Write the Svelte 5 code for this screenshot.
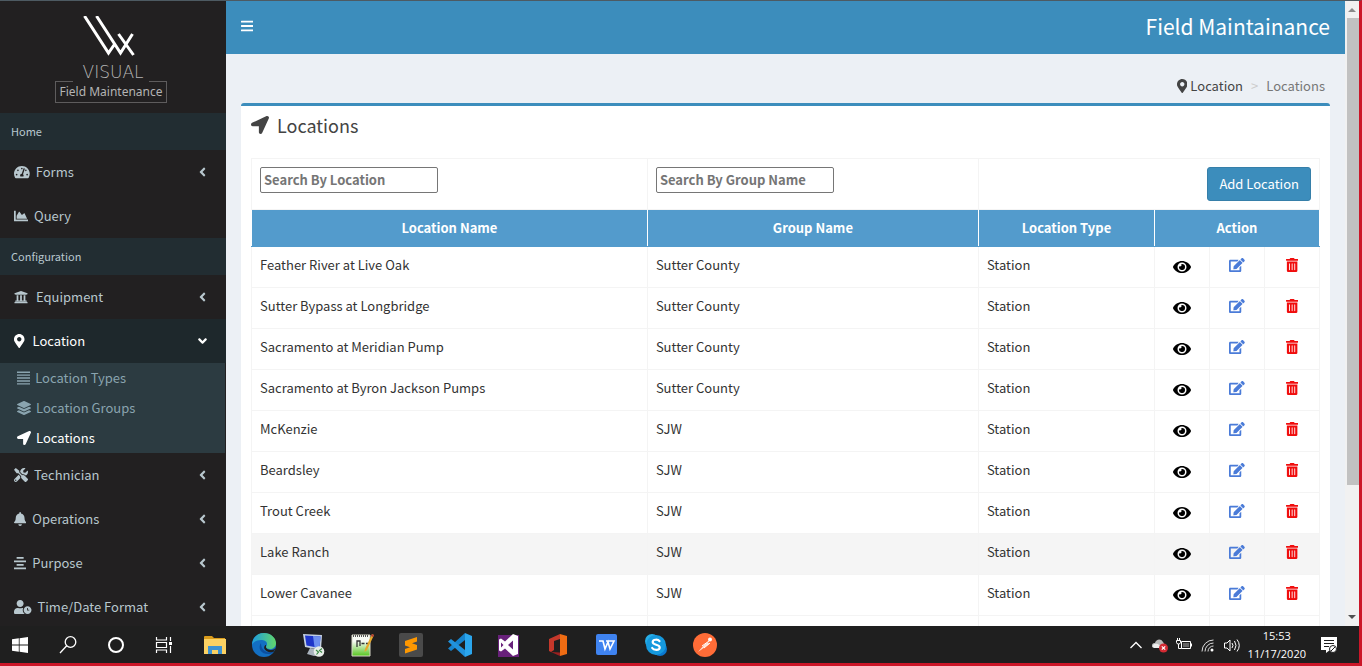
<script lang="ts">
  interface Icon {
    w: number
    d: string
  }

  interface NavItem {
    label: string
    icon: string
    arrow?: boolean
    roomy?: boolean
  }

  interface Location {
    name: string
    group: string
    type: string
  }

  const icons: Record<string, Icon> = {
    bars: { w: 448, d: 'M16 132h416c8.837 0 16-7.163 16-16V76c0-8.837-7.163-16-16-16H16C7.163 60 0 67.163 0 76v40c0 8.837 7.163 16 16 16zm0 160h416c8.837 0 16-7.163 16-16v-40c0-8.837-7.163-16-16-16H16c-8.837 0-16 7.163-16 16v40c0 8.837 7.163 16 16 16zm0 160h416c8.837 0 16-7.163 16-16v-40c0-8.837-7.163-16-16-16H16c-8.837 0-16 7.163-16 16v40c0 8.837 7.163 16 16 16z' },
    arrow: { w: 512, d: 'M444.52 3.52L28.74 195.42c-47.97 22.39-31.98 92.75 19.19 92.75h175.91v175.91c0 51.17 70.36 67.17 92.75 19.19l191.9-415.78c15.99-38.39-25.59-79.97-63.97-63.97z' },
    marker: { w: 384, d: 'M172.268 501.67C26.97 291.031 0 269.413 0 192 0 85.961 85.961 0 192 0s192 85.961 192 192c0 77.413-26.97 99.031-172.268 309.67-9.535 13.774-29.93 13.773-39.464 0zM192 272c44.183 0 80-35.817 80-80s-35.817-80-80-80-80 35.817-80 80 35.817 80 80 80z' },
    gauge: { w: 576, d: 'M288 32C128.94 32 0 160.94 0 320c0 52.8 14.25 102.26 39.06 144.8 5.61 9.62 16.3 15.2 27.44 15.2h443c11.14 0 21.83-5.58 27.44-15.2C561.75 422.26 576 372.8 576 320c0-159.06-128.94-288-288-288zm0 64c14.71 0 26.58 10.13 30.32 23.65-1.11 2.26-2.64 4.23-3.45 6.67l-9.22 27.67c-5.13 3.49-10.97 6.01-17.64 6.01-17.67 0-32-14.33-32-32S270.33 96 288 96zM96 384c-17.67 0-32-14.33-32-32s14.33-32 32-32 32 14.33 32 32-14.33 32-32 32zm48-160c-17.67 0-32-14.33-32-32s14.33-32 32-32 32 14.33 32 32-14.33 32-32 32zm246.77-72.41l-61.33 184C343.13 347.33 352 364.54 352 384c0 11.72-3.38 22.55-8.88 32H232.88c-5.5-9.45-8.88-20.28-8.88-32 0-33.94 26.5-61.43 59.9-63.59l61.34-184.01c4.17-12.56 17.73-19.45 30.36-15.17 12.57 4.19 19.35 17.79 15.17 30.36zm14.66 57.2l15.52-46.55c3.47-1.29 7.13-2.23 11.05-2.23 17.67 0 32 14.33 32 32s-14.33 32-32 32c-11.38-.01-20.89-6.28-26.57-15.22zM480 384c-17.67 0-32-14.33-32-32s14.33-32 32-32 32 14.33 32 32-14.33 32-32 32z' },
    chart: { w: 512, d: 'M500 384c6.6 0 12 5.4 12 12v40c0 6.6-5.4 12-12 12H12c-6.6 0-12-5.4-12-12V76c0-6.6 5.4-12 12-12h40c6.6 0 12 5.4 12 12v308h436zM372.7 159.5L288 216l-85.3-113.7c-5.1-6.8-15.5-6.3-19.9 1L96 248v104h384l-89.9-187.8c-3.2-6.5-11.4-8.7-17.4-4.7z' },
    building: { w: 512, d: 'M496 128v16a8 8 0 0 1-8 8h-24v12c0 6.627-5.373 12-12 12H60c-6.627 0-12-5.373-12-12v-12H24a8 8 0 0 1-8-8v-16a8 8 0 0 1 4.941-7.392l232-88a7.996 7.996 0 0 1 6.118 0l232 88A8 8 0 0 1 496 128zm-24 304H40c-13.255 0-24 10.745-24 24v16a8 8 0 0 0 8 8h464a8 8 0 0 0 8-8v-16c0-13.255-10.745-24-24-24zM96 192v192H60c-6.627 0-12 5.373-12 12v20h416v-20c0-6.627-5.373-12-12-12h-36V192h-64v192h-64V192h-64v192h-64V192H96z' },
    lines: { w: 480, d: 'M0 20h480v52H0zM0 126h480v52H0zM0 232h480v52H0zM0 338h480v52H0zM0 444h480v52H0z' },
    layers: { w: 512, d: 'M12.41 148.02l232.94 105.67c6.8 3.09 14.49 3.09 21.29 0l232.94-105.67c16.55-7.51 16.55-32.52 0-40.03L266.65 2.31a25.607 25.607 0 0 0-21.29 0L12.41 107.98c-16.55 7.51-16.55 32.53 0 40.04zm487.18 88.28l-58.09-26.33-161.64 73.27c-7.56 3.43-15.59 5.17-23.86 5.17s-16.29-1.74-23.86-5.17L70.51 209.97l-58.1 26.33c-16.55 7.5-16.55 32.5 0 40l232.94 105.59c6.8 3.08 14.49 3.08 21.29 0L499.59 276.3c16.55-7.5 16.55-32.5 0-40zm0 127.8l-57.87-26.23-161.86 73.37c-7.56 3.43-15.59 5.17-23.86 5.17s-16.29-1.74-23.86-5.17L70.29 337.87 12.41 364.1c-16.55 7.5-16.55 32.5 0 40l232.94 105.59c6.8 3.08 14.49 3.08 21.29 0L499.59 404.1c16.55-7.5 16.55-32.5 0-40z' },
    tools: { w: 512, d: 'M501.1 395.7L384 278.6c-23.1-23.1-57.6-27.6-85.4-13.9L192 158.1V96L64 0 0 64l96 128h62.1l106.6 106.6c-13.6 27.8-9.2 62.3 13.9 85.4l117.1 117.1c14.6 14.6 38.2 14.6 52.7 0l52.7-52.7c14.5-14.6 14.5-38.2 0-52.7zM331.7 225c28.3 0 54.9 11 74.9 31l19.4 19.4c15.8-6.9 30.8-16.5 43.8-29.5 37.1-37.1 49.7-89.3 37.9-136.7-2.2-9-13.5-12.1-20.1-5.5l-74.4 74.4-67.9-11.3L334 98.9l74.4-74.4c6.6-6.6 3.4-17.9-5.7-20.2-47.4-11.7-99.6.9-136.6 37.9-28.5 28.5-41.9 66.1-41.2 103.6l82.1 82.1c8.1-1.9 16.5-2.9 24.7-2.9zm-103.9 82l-56.7-56.7L18.7 402.8c-25 25-25 65.5 0 90.5s65.5 25 90.5 0l123.6-123.6c-7.6-19.9-9.9-41.6-5-62.7zM64 472c-13.2 0-24-10.8-24-24 0-13.3 10.7-24 24-24s24 10.7 24 24c0 13.2-10.7 24-24 24z' },
    bell: { w: 448, d: 'M224 512c35.32 0 63.97-28.65 63.97-64H160.03c0 35.35 28.65 64 63.97 64zm215.39-149.71c-19.32-20.76-55.47-51.99-55.47-154.29 0-77.7-54.48-139.9-127.94-155.16V32c0-17.67-14.32-32-31.98-32s-31.98 14.33-31.98 32v20.84C118.56 68.1 64.08 130.3 64.08 208c0 102.3-36.15 133.53-55.47 154.29-6 6.45-8.66 14.16-8.61 21.71.11 16.4 12.98 32 32.1 32h383.8c19.12 0 32-15.6 32.1-32 .05-7.55-2.61-15.27-8.61-21.71z' },
    center: { w: 448, d: 'M96 32h256v64H96zM0 160h448v64H0zM96 288h256v64H96zM0 416h448v64H0z' },
    clock: { w: 640, d: 'M496 224c-79.6 0-144 64.4-144 144s64.4 144 144 144 144-64.4 144-144-64.4-144-144-144zm64 150.3c0 5.3-4.4 9.7-9.7 9.7h-60.6c-5.3 0-9.7-4.4-9.7-9.7v-76.6c0-5.3 4.4-9.7 9.7-9.7h12.6c5.3 0 9.7 4.4 9.7 9.7V352h38.3c5.3 0 9.7 4.4 9.7 9.7v12.6zM320 368c0-27.8 6.7-54.1 18.2-77.5-8-1.5-16.2-2.5-24.6-2.5h-16.7c-22.2 10.2-46.9 16-72.9 16s-50.6-5.8-72.9-16h-16.7C60.2 288 0 348.2 0 422.4V464c0 26.5 21.5 48 48 48h347.1c-45.3-31.9-75.1-84.5-75.1-144zm-96-112c70.7 0 128-57.3 128-128S294.7 0 224 0 96 57.3 96 128s57.3 128 128 128z' },
    eye: { w: 576, d: 'M572.52 241.4C518.29 135.59 410.93 64 288 64S57.68 135.64 3.48 241.41a32.35 32.35 0 0 0 0 29.19C57.71 376.41 165.07 448 288 448s230.32-71.64 284.52-177.41a32.35 32.35 0 0 0 0-29.19zM288 400a144 144 0 1 1 144-144 143.93 143.93 0 0 1-144 144zm0-240a95.31 95.31 0 0 0-25.31 3.79 47.85 47.85 0 0 1-66.9 66.9A95.78 95.78 0 1 0 288 160z' },
    edit: { w: 576, d: 'M402.6 83.2l90.2 90.2c3.8 3.8 3.8 10 0 13.8L274.4 405.6l-92.8 10.3c-12.4 1.4-22.9-9.1-21.5-21.5l10.3-92.8L388.8 83.2c3.8-3.8 10-3.8 13.8 0zm162-22.9l-48.8-48.8c-15.2-15.2-39.9-15.2-55.2 0l-35.4 35.4c-3.8 3.8-3.8 10 0 13.8l90.2 90.2c3.8 3.8 10 3.8 13.8 0l35.4-35.4c15.2-15.3 15.2-40 0-55.2zM384 346.2V448H64V128h229.8c3.2 0 6.2-1.3 8.5-3.5l40-40c7.6-7.6 2.2-20.5-8.5-20.5H48C21.5 64 0 85.5 0 112v352c0 26.5 21.5 48 48 48h352c26.5 0 48-21.5 48-48V306.2c0-10.7-12.9-16-20.5-8.5l-40 40c-2.2 2.3-3.5 5.3-3.5 8.5z' },
    trash: { w: 448, d: 'M32 464a48 48 0 0 0 48 48h288a48 48 0 0 0 48-48V128H32zm272-256a16 16 0 0 1 32 0v224a16 16 0 0 1-32 0zm-96 0a16 16 0 0 1 32 0v224a16 16 0 0 1-32 0zm-96 0a16 16 0 0 1 32 0v224a16 16 0 0 1-32 0zM432 32H312l-9.4-18.7A24 24 0 0 0 281.1 0H166.8a23.72 23.72 0 0 0-21.4 13.3L136 32H16A16 16 0 0 0 0 48v32a16 16 0 0 0 16 16h416a16 16 0 0 0 16-16V48a16 16 0 0 0-16-16z' },
    angle: { w: 256, d: 'M31.7 239l136-136c9.4-9.4 24.6-9.4 33.9 0l22.6 22.6c9.4 9.4 9.4 24.6 0 33.9L127.9 256l96.4 96.4c9.4 9.4 9.4 24.6 0 33.9L201.7 409c-9.4 9.4-24.6 9.4-33.9 0l-136-136c-9.5-9.4-9.5-24.6-.1-34z' },
  }

  const home: NavItem[] = [
    { label: 'Forms', icon: 'gauge', arrow: true },
    { label: 'Query', icon: 'chart' },
  ]

  const locationMenu: NavItem[] = [
    { label: 'Location Types', icon: 'lines' },
    { label: 'Location Groups', icon: 'layers' },
    { label: 'Locations', icon: 'arrow' },
  ]

  const configuration: NavItem[] = [
    { label: 'Technician', icon: 'tools', arrow: true },
    { label: 'Operations', icon: 'bell', arrow: true },
    { label: 'Purpose', icon: 'center', arrow: true },
    { label: 'Time/Date Format', icon: 'clock', arrow: true },
  ]

  const locations: Location[] = [
    { name: 'Feather River at Live Oak', group: 'Sutter County', type: 'Station' },
    { name: 'Sutter Bypass at Longbridge', group: 'Sutter County', type: 'Station' },
    { name: 'Sacramento at Meridian Pump', group: 'Sutter County', type: 'Station' },
    { name: 'Sacramento at Byron Jackson Pumps', group: 'Sutter County', type: 'Station' },
    { name: 'McKenzie', group: 'SJW', type: 'Station' },
    { name: 'Beardsley', group: 'SJW', type: 'Station' },
    { name: 'Trout Creek', group: 'SJW', type: 'Station' },
    { name: 'Lake Ranch', group: 'SJW', type: 'Station' },
    { name: 'Lower Cavanee', group: 'SJW', type: 'Station' },
  ]

  let nameQuery = $state('')
  let groupQuery = $state('')
  let locationOpen = $state(true)
  let highlighted = $state('Lake Ranch')

  const visible = $derived(
    locations.filter(
      (l) =>
        l.name.toLowerCase().includes(nameQuery.toLowerCase()) &&
        l.group.toLowerCase().includes(groupQuery.toLowerCase())
    )
  )
</script>

{#snippet icon(name: string)}
  <svg class="icon" viewBox="0 0 {icons[name].w} 512" aria-hidden="true">
    <path d={icons[name].d} />
  </svg>
{/snippet}

{#snippet navItem(item: NavItem)}
  <li>
    <a class="nav-link" class:roomy={item.roomy} href="#{item.label}">
      {@render icon(item.icon)}
      <span>{item.label}</span>
      {#if item.arrow}<i class="caret">{@render icon('angle')}</i>{/if}
    </a>
  </li>
{/snippet}

<div class="screen">
  <div class="window">
    <aside class="sidebar">
      <div class="brand">
        <svg class="brand-mark" viewBox="0 0 52 40" aria-hidden="true">
          <path d="M1.500 0L25.500 37L31 29M13.500 0L37.500 37L49.500 18M35.500 18L50.500 39" />
        </svg>
        <span class="brand-name">VISUAL</span>
        <span class="brand-sub">Field Maintenance</span>
      </div>
      <nav>
        <h2 class="nav-header">Home</h2>
        <ul>
          {#each home as item}{@render navItem(item)}{/each}
        </ul>
        <h2 class="nav-header">Configuration</h2>
        <ul>
          {@render navItem({ label: 'Equipment', icon: 'building', arrow: true, roomy: true })}
          <li>
            <button class="nav-link roomy active" onclick={() => (locationOpen = !locationOpen)}>
              {@render icon('marker')}
              <span>Location</span>
              <i class="caret" class:down={locationOpen}>{@render icon('angle')}</i>
            </button>
            {#if locationOpen}
              <ul class="submenu">
                {#each locationMenu as item}
                  <li>
                    <a href="#{item.label}" class:current={item.label === 'Locations'}>
                      {@render icon(item.icon)}
                      <span>{item.label}</span>
                    </a>
                  </li>
                {/each}
              </ul>
            {/if}
          </li>
          {#each configuration as item}{@render navItem(item)}{/each}
        </ul>
      </nav>
    </aside>

    <div class="page">
      <header class="navbar">
        <button class="toggle" aria-label="Toggle navigation">{@render icon('bars')}</button>
        <span class="app-title">Field Maintainance</span>
      </header>

      <main>
        <nav class="breadcrumb" aria-label="Breadcrumb">
          <a href="#location">{@render icon('marker')}Location</a>
          <span class="sep">&gt;</span>
          <span>Locations</span>
        </nav>

        <section class="box">
          <h1>{@render icon('arrow')}Locations</h1>
          <table>
            <colgroup>
              <col />
              <col class="col-group" />
              <col class="col-type" />
              <col class="col-action" />
              <col class="col-action" />
              <col class="col-action" />
            </colgroup>
            <thead>
              <tr class="filters">
                <td>
                  <input type="text" placeholder="Search By Location" aria-label="Search By Location" bind:value={nameQuery} />
                </td>
                <td>
                  <input type="text" placeholder="Search By Group Name" aria-label="Search By Group Name" bind:value={groupQuery} />
                </td>
                <td colspan="4" class="add"><button>Add Location</button></td>
              </tr>
              <tr class="heads">
                <th>Location Name</th>
                <th>Group Name</th>
                <th>Location Type</th>
                <th colspan="3">Action</th>
              </tr>
            </thead>
            <tbody>
              {#each visible as row (row.name)}
                <tr class:hovered={row.name === highlighted} onmouseenter={() => (highlighted = row.name)}>
                  <td>{row.name}</td>
                  <td>{row.group}</td>
                  <td>{row.type}</td>
                  <td class="action view"><button aria-label="View {row.name}">{@render icon('eye')}</button></td>
                  <td class="action edit"><button aria-label="Edit {row.name}">{@render icon('edit')}</button></td>
                  <td class="action delete"><button aria-label="Delete {row.name}">{@render icon('trash')}</button></td>
                </tr>
              {/each}
              <tr><td></td><td></td><td></td><td></td><td></td><td></td></tr>
            </tbody>
          </table>
        </section>
      </main>
    </div>

    <div class="scrollbar" aria-hidden="true">
      <svg viewBox="0 0 14 17"><path d="M3 11l4-4 4 4z" fill="#8a8a8a" /></svg>
      <div class="track"><div class="thumb"></div></div>
      <svg viewBox="0 0 14 17"><path d="M3 6l4 4 4-4z" fill="#505050" /></svg>
    </div>
  </div>

  <footer class="taskbar">
    <div class="system">
      <button aria-label="Start">
        <svg viewBox="0 0 24 24" fill="#fff"><path d="M4 6.300l6.800-1v6.300H4zM11.600 5.200L20 4v7.600h-8.400zM4 12.400h6.800v6.300L4 17.800zM11.600 12.400H20V20l-8.400-1.200z" /></svg>
      </button>
      <button aria-label="Search">
        <svg viewBox="0 0 24 24" fill="none" stroke="#fff" stroke-width="1.300"><circle cx="14.500" cy="9" r="5.300" /><path d="M10.700 12.800L4 20" /></svg>
      </button>
      <button aria-label="Cortana">
        <svg viewBox="0 0 24 24" fill="none" stroke="#fff" stroke-width="2"><circle cx="12" cy="12" r="7" /></svg>
      </button>
      <button aria-label="Task View">
        <svg viewBox="0 0 24 24" fill="none" stroke="#fff" stroke-width="1.200"><path d="M4.500 4v3h10V4M4.500 20v-3h10v3M4.500 9.500h10v5h-10zM18.500 4v4M18.500 13v7" /><path d="M17 9h3v3h-3z" fill="#fff" stroke="none" /></svg>
      </button>
    </div>
    <div class="apps">
      <button aria-label="File Explorer">
        <svg viewBox="0 0 24 24"><path d="M1 4q0-1 1-1h7l2 2h11v16H1z" fill="#d99c1c" /><path d="M1 6h22v15H1z" fill="#fbd163" /><path d="M5 13h14v8h-4v-4H9v4H5z" fill="#3c92d2" /></svg>
      </button>
      <button aria-label="Microsoft Edge">
        <svg viewBox="0 0 24 24">
          <defs><linearGradient id="edge" x1="0" y1="0" x2="1" y2="0"><stop offset="0" stop-color="#1d9de0" /><stop offset="1" stop-color="#62d66a" /></linearGradient></defs>
          <circle cx="12" cy="12" r="12" fill="#136fc2" />
          <path d="M0 12C0 5 5 0 12 0s12 5 12 10c0 4-3 6-6 6-2.500 0-4-1-4-2 0-.8 1-1 1-3 0-3-3-4-6-4-4 0-8 2-9 5z" fill="url(#edge)" />
          <path d="M9 10c-4 6 1 12 9 11 2-.3 4-2 4-3-5 3-13 1-13-8z" fill="#0c4fa0" />
          <path d="M14 14c0 2 3 3 5 3 2 0 3.500-1 4.500-2L22 18.500c-4 2-8 0-9.500-2.500-1-2 .5-4 1.500-4z" fill="#1f1f1f" />
        </svg>
      </button>
      <button aria-label="Remote Desktop">
        <svg viewBox="0 0 24 24"><path d="M2 1l19 1-1 15-16-3z" fill="#c4d0e2" /><path d="M4 2.500l15.500 1-1 11.500L5.500 12.500z" fill="#1e35c9" /><path d="M12 3l7.500.5-1 11.500-5-1z" fill="#6d8ff0" /><path d="M9 15l5 1v4l5 2-6 1-7-2z" fill="#aab3bd" /><circle cx="18" cy="18.500" r="5.300" fill="#e7ece7" /><path d="M15 17l2.500 2-2 2.500M21 15.500l-2.500 2 2.500 2" fill="none" stroke="#3a8a45" stroke-width="1.200" /></svg>
      </button>
      <button aria-label="Notepad++">
        <svg viewBox="0 0 24 24"><defs><linearGradient id="note" x1="0" y1="0" x2="0" y2="1"><stop offset=".3" stop-color="#f7faf4" /><stop offset="1" stop-color="#55c51e" /></linearGradient></defs><path d="M2 2h18v21H2z" fill="url(#note)" stroke="#d6d6c6" /><path d="M3 3h16" stroke="#555" stroke-width="2" stroke-dasharray="1 1" /><path d="M7 14V8h3v5M11.500 10.500h3M16 10.500h2" fill="none" stroke="#333" stroke-width="1.300" /><path d="M22 1l2 1-7 15-2.500 2 .5-3z" fill="#e8a92c" /><path d="M22 1l2 1-1 2-2-1z" fill="#b23b38" /></svg>
      </button>
      <button aria-label="Sublime Text">
        <svg viewBox="0 0 24 24"><rect width="24" height="24" rx="2" fill="#4a4a4a" /><path d="M18 4v4.500l-5 1.700 5 1.800v4.500L6 20.500V16l5-1.700-5-1.800V8z" fill="#ff9800" /></svg>
      </button>
      <button aria-label="Visual Studio Code">
        <svg viewBox="0 0 24 24"><path d="M17 0l7 3v18l-7 3z" fill="#2ba6ed" /><path d="M17 0v7L3 18l-3-2.500z" fill="#1683cc" /><path d="M17 24v-7L3 6 0 8.500z" fill="#2192dc" /></svg>
      </button>
      <button aria-label="Visual Studio">
        <svg viewBox="0 0 24 24"><path d="M1 2h21v22H1z" fill="#68217a" /><path d="M16 1l5 2v18l-5 2-8-7.500-4 3-2-1V6.500l2-1 4 3zM16 7.500L11 12l5 4.500zM4 9.500v5L6.500 12z" fill="#fff" fill-rule="evenodd" /></svg>
      </button>
      <button aria-label="Office">
        <svg viewBox="0 0 24 24"><path d="M3 6l11-5v5L8 8v9l-3 2-2-1z" fill="#c5382b" /><path d="M14 1l7 2v18l-7 2z" fill="#ef6c13" /><path d="M5 19l9 .5V23z" fill="#9c2020" /></svg>
      </button>
      <button aria-label="WPS Writer">
        <svg viewBox="0 0 24 24"><rect x="1" y="1" width="21" height="21" rx="2" fill="#3f83f0" /><path d="M4 8h4l2 8 3-7 2 7 4-8h-8" fill="none" stroke="#fff" stroke-width="1.600" /></svg>
      </button>
      <button aria-label="Skype">
        <svg viewBox="0 0 24 24"><circle cx="8" cy="8" r="7" fill="#27aee8" /><circle cx="16" cy="16" r="7" fill="#0a78cf" /><circle cx="12" cy="12" r="10" fill="#1599de" /><path d="M15.500 8.200C14 6 8.700 6.200 8.700 9c0 3.500 7 2 7 5.500 0 3.200-6 3-7.500.5" fill="none" stroke="#fff" stroke-width="2.200" stroke-linecap="round" /></svg>
      </button>
      <button aria-label="Postman">
        <svg viewBox="0 0 24 24"><circle cx="12" cy="12" r="12" fill="#ff6c37" /><path d="M5 19l6-7 4-3 1 2-4 3z" fill="#fde3d8" /><circle cx="17" cy="6.500" r="2" fill="#fff" /><path d="M9 13l7-5M11 15l6-5" stroke="#fff" /></svg>
      </button>
    </div>

    <div class="tray">
      <svg viewBox="0 0 16 16" fill="none" stroke="#fff" stroke-width="1.300"><path d="M2.500 11L8 5.500l5.500 5.500" /></svg>
      <svg viewBox="0 0 16 16"><path d="M0 10c-.5-3 1-4 3-4 1-4 6-5 8-1l2 3v3H2z" fill="#b9b9b9" /><path d="M3 7c3-1 5 1 6 4H2c-2-2-1-4 1-4z" fill="#ededed" /><circle cx="11.500" cy="11" r="4.500" fill="#d42a33" /><path d="M9.800 9.300l3.400 3.400M13.200 9.300l-3.400 3.400" stroke="#fff" stroke-width="1.200" /></svg>
      <svg viewBox="0 0 16 16" fill="none" stroke="#fff"><path d="M5.500 4.500h9v7h-9zM15.500 6.500v3M.5 3.500h4v2q0 1.500-2 1.500t-2-1.500zM1.500 1v2.500M3.500 1v2.500M2.500 7v4.500h3" /><path d="M7 6h6v4H7z" fill="#fff" stroke="none" opacity=".3" /></svg>
      <svg viewBox="0 0 16 16" fill="none" stroke="#ddd"><path d="M2 14.500A11.500 11.500 0 0 1 13.500 3M5 14.500A8.500 8.500 0 0 1 13.500 6M8 14.500A5.500 5.500 0 0 1 13.500 9" /><circle cx="12" cy="13" r="1.500" fill="#fff" stroke="none" /></svg>
      <svg viewBox="0 0 16 16" fill="none" stroke="#fff"><path d="M.5 6h2.500l3-3v11l-3-3H.5zM8 6q2 2.500 0 5M10.500 4q3 4.500 0 9M13 2.500q4.500 6 0 12" /></svg>
      <div class="clock"><span>15:53</span><span>11/17/2020</span></div>
      <svg class="notice" viewBox="0 0 18 18"><path d="M1 1h16v13h-7l-4 3v-3H1z" fill="#fff" /><path d="M4 4.500h10M4 7.500h10M4 10.500h5" stroke="#1f1f1f" /><circle cx="13" cy="13" r="3.500" fill="#fff" stroke="#1f1f1f" /><path d="M11 15l4-4" stroke="#1f1f1f" /></svg>
    </div>
  </footer>
</div>

<style>
  :global(body) {
    margin: 0;
  }

  .screen {
    display: flex;
    flex-direction: column;
    height: 100vh;
    box-sizing: border-box;
    overflow: hidden;
    border-top: 1px solid #4d5a62;
    border-right: 3px solid #cb1628;
    border-bottom: 3px solid #cb1628;
    background: #ecf0f5;
    color: #333;
    font-family: 'Noto Sans CJK SC', 'Open Sans', sans-serif;
    font-size: 13px;
    line-height: 20px;
  }

  button {
    border: 0;
    padding: 0;
    background: none;
    color: inherit;
    font: inherit;
    cursor: pointer;
  }

  a {
    color: inherit;
    text-decoration: none;
  }

  ul {
    list-style: none;
    margin: 0;
    padding: 0;
  }

  .icon {
    display: block;
    flex: none;
    height: 14px;
    fill: currentColor;
  }

  .window {
    display: flex;
    flex: 1;
    min-height: 0;
  }

  /* Sidebar */
  .sidebar {
    flex: none;
    width: 226px;
    overflow: hidden;
    background: #222021;
    color: #b8c7ce;
  }

  .brand {
    display: flex;
    flex-direction: column;
    align-items: center;
    box-sizing: border-box;
    height: 112px;
    padding: 15px 4px 0 0;
    color: #b4b4b4;
  }

  .brand-mark {
    width: 52px;
    height: 40px;
    margin-right: 4px;
    fill: none;
    stroke: #fff;
    stroke-width: 3;
  }

  .brand-name {
    padding-left: 4px;
    margin-top: 7px;
    font-family: 'DejaVu Sans', sans-serif;
    font-size: 17px;
    font-weight: 200;
    line-height: 18px;
  }

  /* The frame's top edge is open under the name, so only its corners are drawn */
  .brand-sub {
    padding: 1px 3px 0;
    border: 1px solid #5e5c5d;
    border-top: 0;
    background:
      linear-gradient(#5e5c5d, #5e5c5d) left top / 17px 1px no-repeat,
      linear-gradient(#5e5c5d, #5e5c5d) right top / 17px 1px no-repeat;
    font-family: 'Noto Sans', sans-serif;
    font-size: 12px;
    line-height: 20px;
  }

  .nav-header {
    margin: 0;
    padding: 8px 11px 9px;
    background: #222d32;
    font-size: 11px;
    font-weight: 400;
    line-height: 20px;
  }

  .nav-link {
    display: flex;
    align-items: center;
    gap: 6px;
    box-sizing: border-box;
    width: 100%;
    padding: 12px 20px 12px 14px;
    text-align: left;
  }

  .nav-link.roomy {
    gap: 8px;
  }

  .nav-link.active {
    background: #1e282c;
    color: #fff;
  }

  .caret {
    margin-left: auto;
  }

  .caret.down {
    transform: rotate(-90deg);
  }

  .submenu {
    margin-right: 1px;
    background: #2c3b41;
    color: #8aa4af;
  }

  .submenu a {
    display: flex;
    align-items: center;
    gap: 5px;
    padding: 5px 17px;
  }

  .submenu .current {
    color: #fff;
  }

  /* Main column */
  .page {
    flex: 1;
    min-width: 0;
    overflow: hidden;
  }

  .navbar {
    display: flex;
    align-items: center;
    justify-content: space-between;
    box-sizing: border-box;
    height: 53px;
    padding: 0 15px 4px;
    background: #3c8dbc;
    color: #fff;
  }

  .app-title {
    font-size: 21px;
    line-height: 28px;
  }

  main {
    padding: 0 15px;
  }

  .breadcrumb {
    display: flex;
    justify-content: flex-end;
    gap: 8px;
    padding: 22px 5px 7px;
    color: #777;
  }

  .breadcrumb a {
    display: flex;
    align-items: center;
    gap: 3px;
    color: #444;
  }

  .sep {
    color: #ccc;
  }

  .box {
    padding: 0 10px 10px;
    border-top: 3px solid #3c8dbc;
    border-radius: 3px;
    background: #fff;
  }

  h1 {
    display: flex;
    align-items: center;
    gap: 8px;
    margin: 0;
    padding: 5px 0 19px;
    color: #444;
    font-size: 18px;
    font-weight: 400;
    line-height: 28px;
  }

  h1 .icon {
    height: 18px;
  }

  table {
    width: 100%;
    border-collapse: collapse;
    table-layout: fixed;
  }

  .col-group {
    width: 31%;
  }

  .col-type {
    width: 176px;
  }

  .col-action {
    width: 55px;
  }

  td,
  th {
    box-sizing: border-box;
    height: 41px;
    padding: 8px;
    border: 1px solid #f4f4f4;
    text-align: left;
    vertical-align: top;
  }

  .filters td {
    height: 51px;
  }

  .filters input {
    display: block;
    box-sizing: border-box;
    width: 178px;
    height: 26px;
    padding: 0 3px 2px;
    border: 1px solid #767676;
    border-radius: 2px;
    font: inherit;
    font-weight: 700;
  }

  .filters input::placeholder {
    color: #757575;
  }

  .filters .add {
    text-align: right;
  }

  .add button {
    padding: 6px 11px;
    border: 1px solid #367fa9;
    border-radius: 3px;
    background: #3c8dbc;
    color: #fff;
    vertical-align: top;
  }

  .heads th {
    height: 36px;
    border-color: #539bcc #fff;
    background: #539bcc;
    color: #fff;
    font-weight: 700;
    text-align: center;
  }

  .hovered {
    background: #f5f5f5;
  }

  .action button {
    display: block;
    margin: 3px auto;
  }

  .view {
    color: #000;
  }

  .view button {
    height: 18px;
  }

  .view .icon {
    height: 16px;
  }

  .edit {
    color: #4a7bd8;
  }

  .delete {
    color: #f00d0d;
  }

  .scrollbar {
    display: flex;
    flex: none;
    flex-direction: column;
    width: 14px;
    background: #f1f1f1;
  }

  .scrollbar svg {
    flex: none;
    width: 14px;
    height: 17px;
  }

  .track {
    flex: 1;
    padding: 0 0 0 2px;
  }

  .thumb {
    height: 79%;
    background: #c1c1c1;
  }

  /* Taskbar */
  .taskbar {
    display: flex;
    flex: none;
    align-items: center;
    height: 37px;
    padding: 0 21px 0 8px;
    background: #1f1f1f;
    color: #fff;
  }

  .system,
  .apps,
  .tray {
    display: flex;
    align-items: center;
  }

  .system {
    gap: 24px;
  }

  .apps {
    gap: 25px;
    margin-left: 27px;
  }

  .taskbar button,
  .taskbar button svg {
    display: block;
    width: 24px;
    height: 24px;
  }

  .tray {
    gap: 8px;
    margin-left: auto;
  }

  .tray svg {
    width: 16px;
    height: 16px;
  }

  .clock {
    display: flex;
    flex-direction: column;
    align-items: center;
    font-family: 'Open Sans', sans-serif;
    font-size: 11px;
    line-height: 18px;
  }

  .tray .notice {
    width: 18px;
    height: 18px;
    margin-left: 6px;
  }
</style>
